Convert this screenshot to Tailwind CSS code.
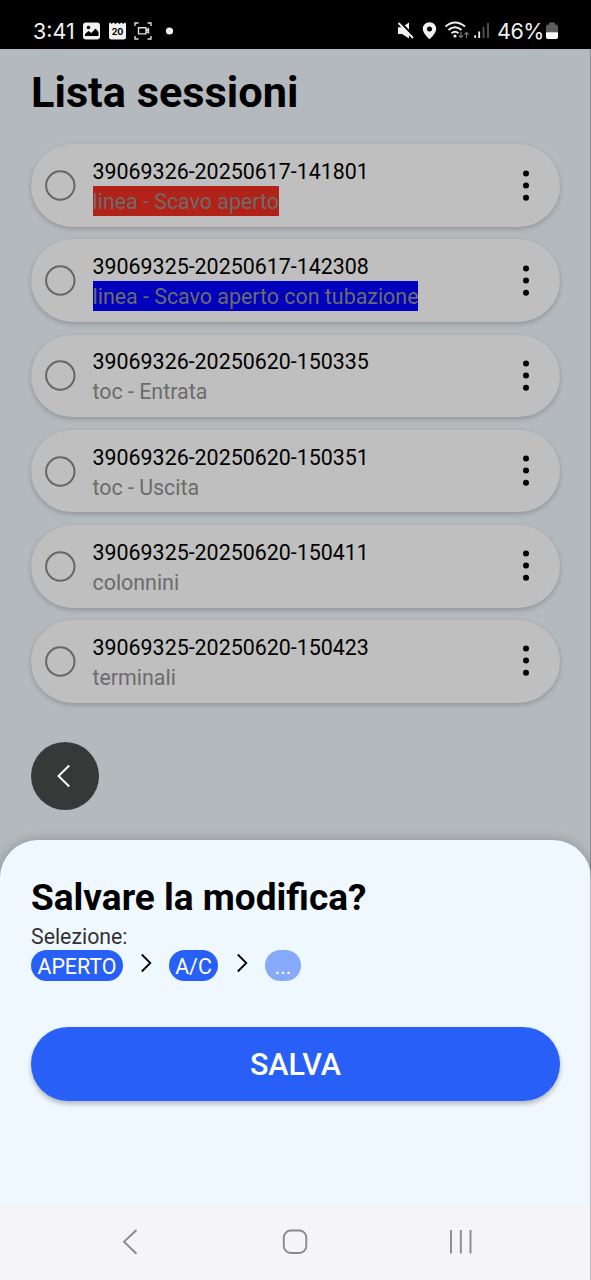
<!DOCTYPE html>
<html lang="it">
<head>
<meta charset="utf-8">
<meta name="viewport" content="width=device-width, initial-scale=1">
<title>Lista sessioni</title>
<script src="https://cdn.jsdelivr.net/npm/@tailwindcss/browser@4"></script>
</head>
<body class="bg-[#b4b9be]">
<div class="relative flex h-[1280px] w-[591px] flex-col overflow-hidden bg-[#b4b9be] font-['Roboto',sans-serif] whitespace-nowrap text-black">
  <header class="flex h-[49px] shrink-0 items-center bg-black pt-[13px] pl-8 text-[#f1f1f1]">
    <div class="w-[50px] pl-px font-['Inter',sans-serif] text-[21.5px] leading-[36px]">3:41</div>
    <svg class="w-[100px] shrink-0" height="24" viewBox="82 19 100 24" fill="none">
      <rect x="83" y="22.500" width="17" height="17" rx="3" fill="#f1f1f1"/>
      <circle cx="88.500" cy="27.500" r="1.800" fill="#000"/>
      <path d="M85 36v-2l3.500-3 3 2 4-4.500 3 3.500v4z" fill="#000"/>
      <path d="M109 24q0-1.500 1.500-1.500l1 1.500 2-1.500 2 1.500 2-1.500 2 1.500 2-1.500 2 1.500 1-1.500q1.500 0 1.500 1.500v13q0 2.500-2.500 2.500h-12q-2.500 0-2.500-2.500z" fill="#f1f1f1"/>
      <text x="117.500" y="35" text-anchor="middle" font-family="Inter" font-weight="700" font-size="9" fill="#000">20</text>
      <path d="M135 26v-3h3.500M147.500 23h3.500v3M151 36v3h-3.500M138.500 39H135v-3M138.500 27.700h7.500v6.200h-7.500zM146 30.300l2.500-1.500v4L146 31.500" stroke="#dedede" stroke-width="1.400"/>
      <circle cx="169.500" cy="31" r="3.600" fill="#f1f1f1"/>
    </svg>
    <svg class="ml-[214px] w-[101px] shrink-0" height="24" viewBox="396 19 101 24" fill="none">
      <path d="M398 27.300h4l7-4.800v16l-7-4.500h-4z" fill="#f1f1f1"/>
      <path d="M399.500 21.500l16 16.500" stroke="#000" stroke-width="2.200"/><path d="M398.500 23L413 38" stroke="#f1f1f1" stroke-width="1.800"/>
      <path fill-rule="evenodd" d="M429.500 22.300c-4 0-6.700 3-6.700 6.700 0 4.600 6.700 10.200 6.700 10.200s6.700-5.600 6.700-10.200c0-3.700-2.700-6.700-6.700-6.700zm0 4.100a2.500 2.500 0 110 5 2.500 2.500 0 010-5z" fill="#f1f1f1"/>
      <path d="M445.500 26.500q9.500-8 19.500 0M448.500 30q6.500-5.500 13 0M451.500 33.300q3.500-3 7 0" stroke="#f1f1f1" stroke-width="2"/>
      <circle cx="455" cy="36" r="1.600" fill="#f1f1f1"/>
      <path d="M461 32v5.500m-2-2l2 2 2-2M466.500 38v-5.500m-2 2l2-2 2 2" stroke="#777" stroke-width="1.200"/>
      <path d="M475.200 35.300V38M479.200 31.500V38" stroke="#f1f1f1" stroke-width="1.800"/><path d="M483.500 27V38M488 23V38" stroke="#555" stroke-width="1.800"/>
    </svg>
    <div class="w-[48px] font-['Inter',sans-serif] text-[21.500px] leading-[36px] tracking-[-0.500px]">46%</div>
    <svg class="ml-px w-3 shrink-0" height="24" viewBox="546 19 12 24"><path d="M549 22.500h6v2h1q2 0 2 2v6h-12v-6q0-2 2-2h1z" fill="#5c5c5c"/><path d="M546 32.300h12V37q0 2-2 2h-8q-2 0-2-2z" fill="#fff"/></svg>
  </header>

  <main class="px-[31px] pt-[18px]">
    <h1 class="h-[50px] text-[43.300px] leading-[52px] font-bold">Lista sessioni</h1>
    <ul id="sessions" class="mt-[27.300px] flex flex-col gap-[12.700px]"></ul>
    <button class="mt-[39.500px] flex size-[68px] items-center justify-center rounded-full bg-[#373938] pr-[2px]">
      <svg width="24" height="24" viewBox="0 0 24 24" fill="none" stroke="#fff" stroke-width="1.900"><path d="M17.200 1.500L6.500 12l10.700 10.500"/></svg>
    </button>
  </main>

  <section class="mt-auto flex h-[365px] shrink-0 flex-col rounded-t-[38px] bg-[#f0f8ff] px-[31px] pt-[34px] shadow-[0_0_12px_rgba(0,0,0,0.22)]">
    <h2 class="h-[46px] text-[37px] leading-[48px] font-bold">Salvare la modifica?</h2>
    <p class="mt-px h-[29px] text-[21.300px] leading-[31px] text-[#333]">Selezione:</p>
    <div class="flex h-[31px] items-center text-[21.400px] leading-[33px] text-white">
      <span class="h-[31px] w-[92px] rounded-full bg-[#275ff7] text-center">APERTO</span>
      <svg class="mx-[17px] -mt-[5px]" width="12" height="20" viewBox="0 0 12 20" fill="none" stroke="#000" stroke-width="1.800"><path d="M1.800 1.500L10.300 10l-8.500 8.500"/></svg>
      <span class="h-[31px] w-[49px] rounded-full bg-[#275ff7] text-center">A/C</span>
      <svg class="mr-[17px] ml-[18px] -mt-[5px]" width="12" height="20" viewBox="0 0 12 20" fill="none" stroke="#000" stroke-width="1.800"><path d="M1.800 1.500L10.300 10l-8.500 8.500"/></svg>
      <span class="h-[31px] w-[36px] rounded-full bg-[#86a9fa] text-center">...</span>
    </div>
    <button class="mt-[46px] h-[74px] w-[529px] rounded-full bg-[#275ff7] pt-[2px] text-[30.500px] font-medium text-white shadow-[0_3px_5px_rgba(0,0,0,0.27)]">SALVA</button>
  </section>

  <nav class="flex h-[75px] shrink-0 bg-[#f5f5f7]">
    <svg width="591" height="75" viewBox="0 1205 591 75" fill="none" stroke="#8b8b8e" stroke-width="1.900">
      <path d="M136.500 1230L124 1241.800l12.500 12"/>
      <rect x="283.800" y="1230.500" width="22.500" height="22.500" rx="7"/>
      <path d="M451 1230v23.500M460.800 1230v23.500M470.500 1230v23.500"/>
    </svg>
  </nav>
  <div class="absolute top-[49px] right-0 h-[1231px] w-px bg-black/25"></div>
</div>
<template id="card">
  <li class="flex h-[82.500px] items-center rounded-full bg-[#bfbfbf] pr-[24px] pl-[14px] shadow-[0_2px_5px_rgba(0,0,0,0.2)]">
    <svg width="31" height="31" viewBox="0 0 31 31" fill="none" stroke="#666" stroke-width="2"><circle cx="15.300" cy="15.500" r="14.200"/></svg>
    <div class="ml-[16.500px] flex flex-1 flex-col items-start text-[21.400px] leading-[32px]">
      <div data-code class="h-[31px] pt-px"></div>
      <div data-kind class="h-[30px] text-[#6c6c6c]"></div>
    </div>
    <svg width="20" height="34" viewBox="0 0 20 34"><circle cx="10" cy="4.500" r="3"/><circle cx="10" cy="16.600" r="3"/><circle cx="10" cy="28.700" r="3"/></svg>
  </li>
</template>
<script>
  const sessions = [
    ["39069326-20250617-141801", "linea - Scavo aperto", "bg-[#b22218]"],
    ["39069325-20250617-142308", "linea - Scavo aperto con tubazione", "bg-[#0000bd]"],
    ["39069326-20250620-150335", "toc - Entrata"],
    ["39069326-20250620-150351", "toc - Uscita"],
    ["39069325-20250620-150411", "colonnini"],
    ["39069325-20250620-150423", "terminali"],
  ];
  for (const [code, kind, color] of sessions) {
    const li = document.getElementById("card").content.cloneNode(true);
    li.querySelector("[data-code]").textContent = code;
    const k = li.querySelector("[data-kind]");
    k.textContent = kind;
    if (color) k.classList.add(color);
    document.getElementById("sessions").append(li);
  }
</script>
</body>
</html>
